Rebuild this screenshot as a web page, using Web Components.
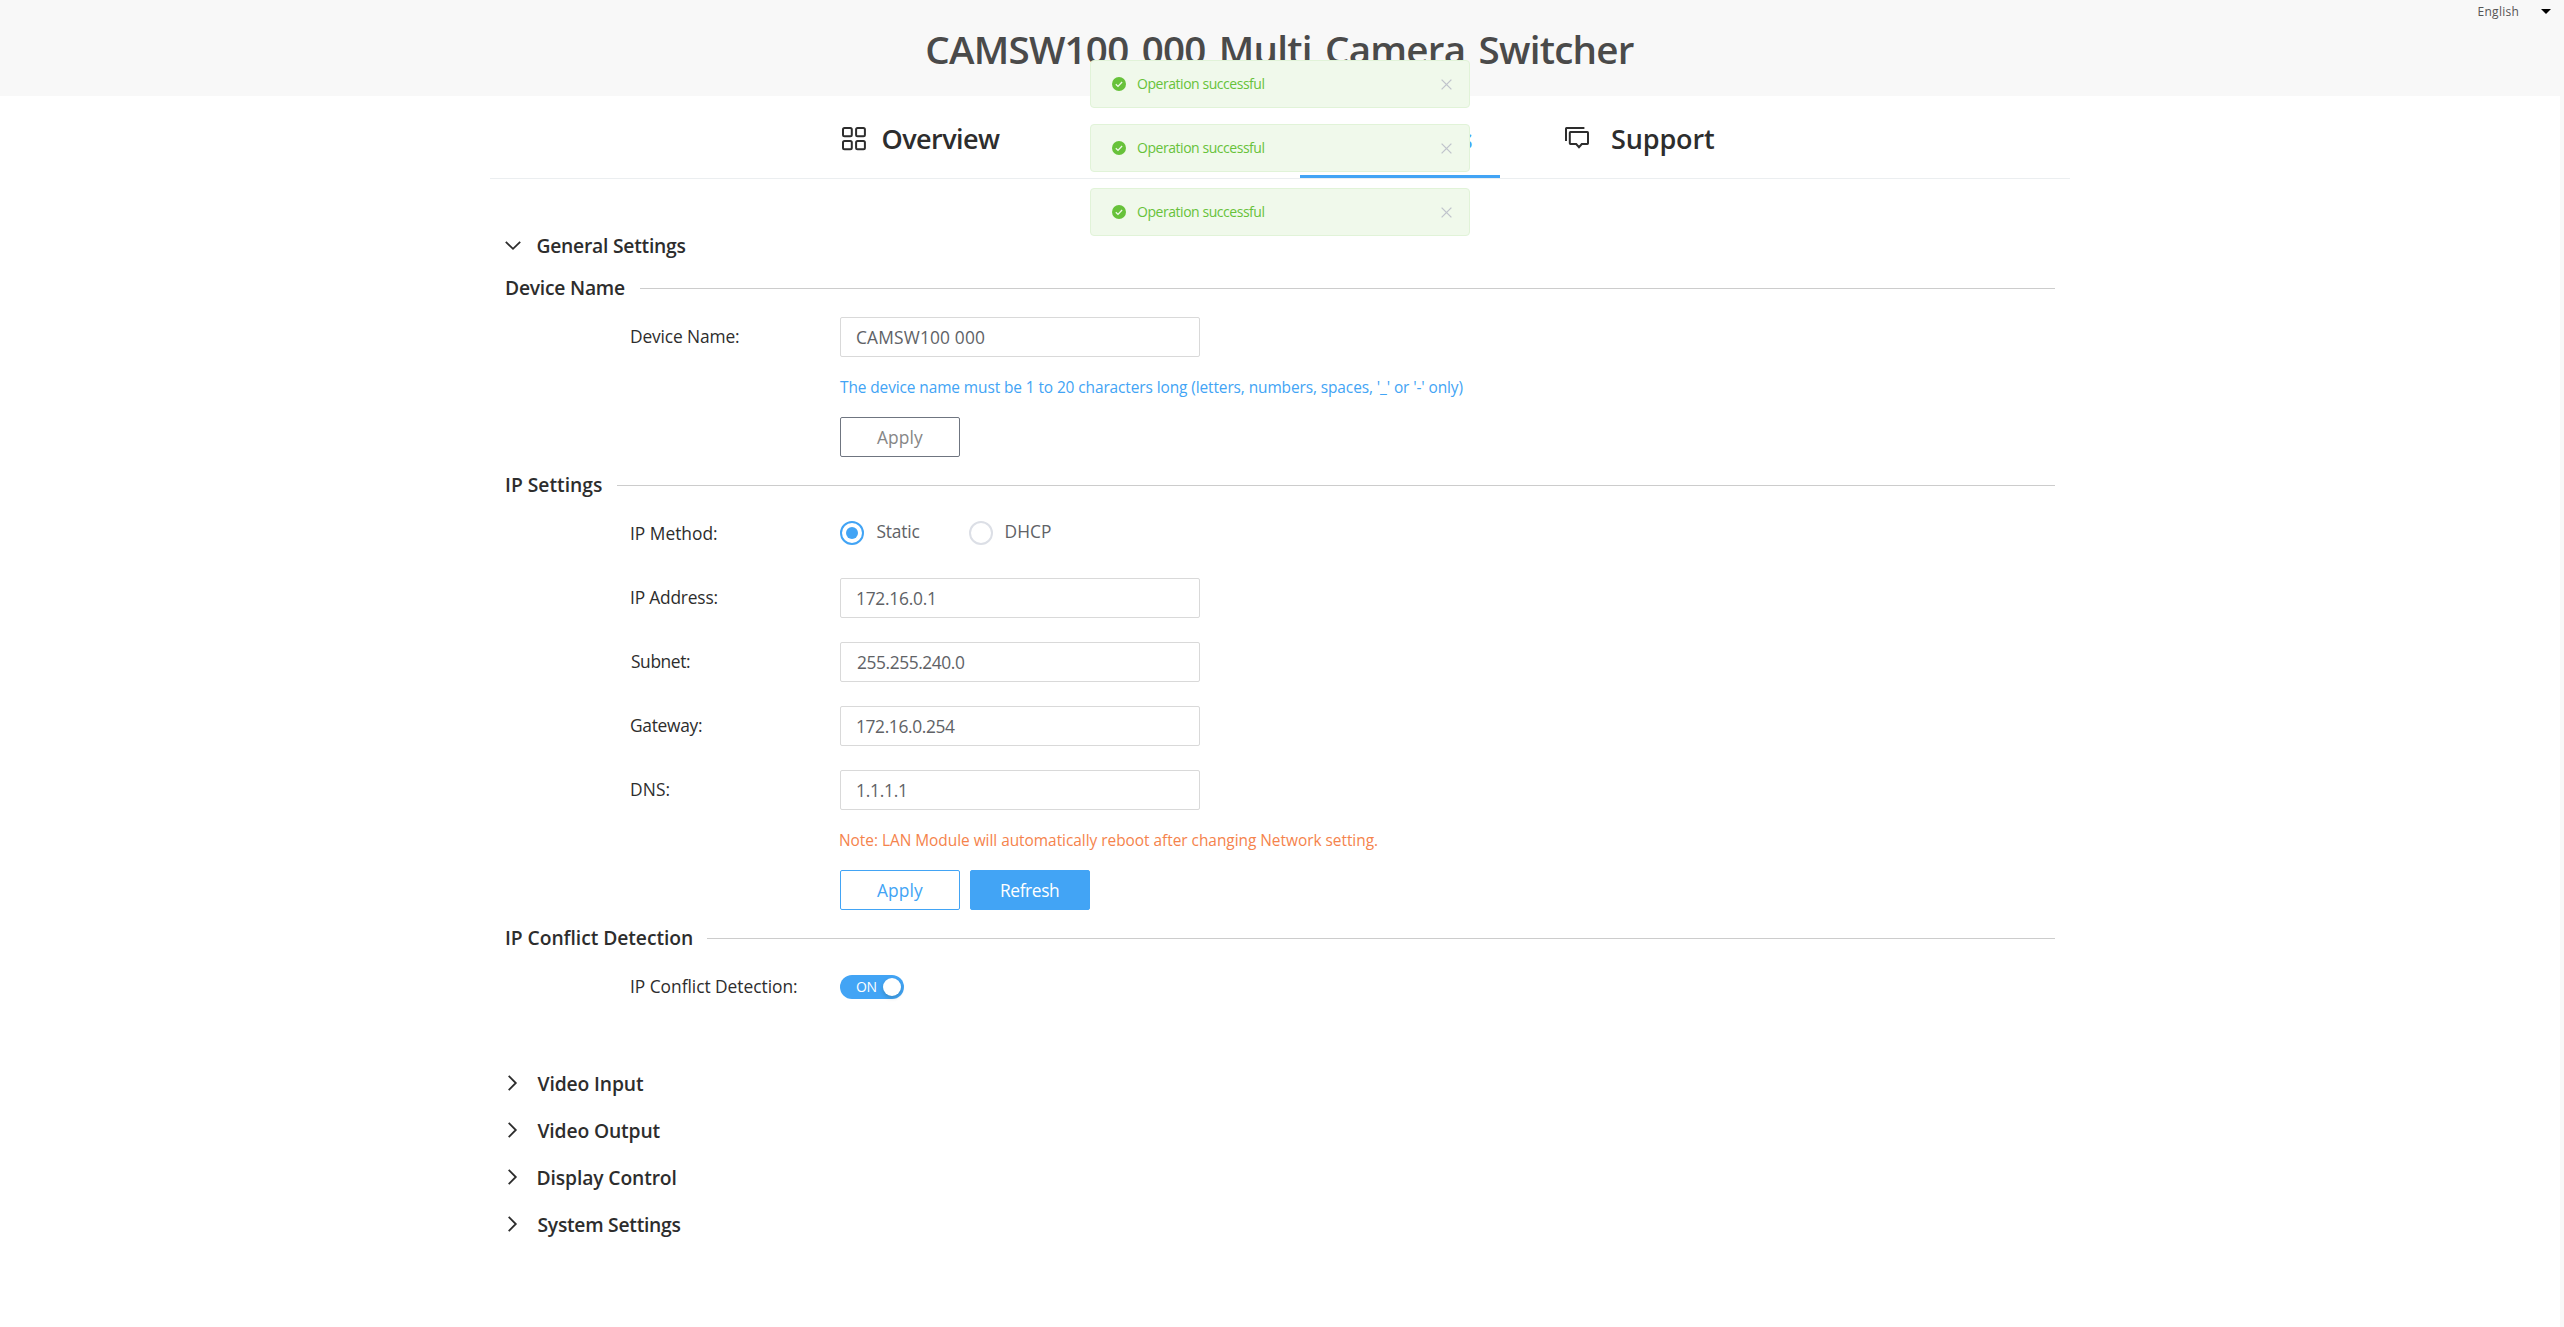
<!DOCTYPE html>
<html lang="en">
<head>
<meta charset="utf-8">
<title>CAMSW100 000 Multi Camera Switcher</title>
<style>
body{margin:0;background:#f8f8f8;font-family:"Open Sans","Noto Sans",sans-serif;color:#2d2d2d;height:1327px;overflow:hidden}
</style>
</head>
<body>
<app-shell></app-shell>
<script>
const define=(name,html,setup)=>{
  const t=document.createElement('template');t.innerHTML=html;
  customElements.define(name,class extends HTMLElement{
    connectedCallback(){
      if(this.shadowRoot)return;
      this.attachShadow({mode:'open'}).append(t.content.cloneNode(true));
      if(setup)setup.call(this,this.shadowRoot);
    }
  });
};
const ctx=document.createElement('canvas').getContext('2d');

/* One line of text tracked so that its ink spans the width given in w */
define('ui-text',`<style>
:host{display:block;white-space:pre;flex:none}
span{display:block}
</style><span><slot></slot></span>`,function(root){
  const px=parseFloat(this.getAttribute('size')),size=px>14?px*0.965:px,w=parseFloat(this.getAttribute('w'));
  const gap=parseFloat(this.getAttribute('word-gap')||0);
  const weight=this.getAttribute('weight')||'400',s=this.textContent;
  ctx.font=weight+' '+size+'px "Open Sans","Noto Sans",sans-serif';
  const m=ctx.measureText(s),left=-m.actualBoundingBoxLeft,ink=m.actualBoundingBoxRight-left;
  this.style.fontSize=size+'px';this.style.fontWeight=weight;this.style.width=w+'px';
  this.style.lineHeight=Math.round(size*1.069)+Math.round(size*0.293)+'px';
  const span=root.querySelector('span');
  span.style.wordSpacing=gap+'px';
  span.style.letterSpacing=((w-ink-gap*(s.split(' ').length-1))/(s.length-1))+'px';
  span.style.marginLeft=-left+'px';
});

define('ui-icon',`<style>:host{display:block;flex:none;line-height:0}svg{display:block;overflow:visible}</style><svg fill="none"></svg>`,function(root){
  const icons={
    grid:[24,23,'<g stroke="#2d2d2d" stroke-width="2"><rect x="1" y="1" width="8.8" height="8.2" rx="1.5"/><rect x="14.1" y="1" width="8.8" height="8.2" rx="1.5"/><rect x="1" y="14" width="8.8" height="8.2" rx="1.5"/><rect x="14.1" y="14" width="8.8" height="8.2" rx="1.5"/></g>'],
    gear:[24,23,'<g stroke="#42a4f5" stroke-width="2"><path d="M8 2h8l6 10-6 10H8L2 12z"/><circle cx="12" cy="12" r="4"/></g>'],
    chat:[24,23,'<g stroke="#2d2d2d" stroke-width="2"><path d="M1 14V1.5Q1 1 1.5 1h17.9"/><path d="M5.4 5h17q.6 0 .6.7v10.6q0 .7-.6.7H16.8L14 20.2 11.2 17H5.4q-.6 0-.6-.7V5.7q0-.7.6-.7z"/></g>'],
    down:[16,9,'<path d="M.8.8 8 7.8 15.2.8" stroke="#2d2d2d" stroke-width="1.8"/>'],
    right:[16,16,'<path d="M3.7.9 10.8 8l-7.1 7.1" stroke="#2d2d2d" stroke-width="1.8"/>'],
    caret:[10,5,'<path d="M0 0h10L5 5z" fill="#000"/>'],
    check:[14,14,'<circle cx="7" cy="7" r="7" fill="#67c23a"/><path d="m3.8 7.2 2.2 2.2 4.1-4.4" stroke="#f0f9eb" stroke-width="1.3"/>'],
    close:[11,11,'<path d="m.6.6 9.8 9.8M10.4.6.6 10.4" stroke="#c0c4cc" stroke-width="1.3"/>']
  };
  const [w,h,body]=icons[this.getAttribute('name')],svg=root.querySelector('svg');
  svg.setAttribute('width',w);svg.setAttribute('height',h);svg.setAttribute('viewBox','0 0 '+w+' '+h);svg.innerHTML=body;
});

define('app-header',`<style>
:host{display:grid;grid-template-columns:1fr auto 1fr;height:96px;background:#f8f8f8;color:#4a4a4a;width:2560px}
.title{padding:23px 0 0 1px}
.lang{display:flex;justify-content:flex-end;align-items:flex-start;padding-right:9px;gap:22.5px;color:#555}
ui-icon{padding-top:9px}.lang ui-text{padding-top:3px}
</style><div></div><div class="title"><ui-text size="40" weight="600" w="706.5" word-gap="4">CAMSW100 000 Multi Camera Switcher</ui-text></div>
<div class="lang"><ui-text size="12" w="40">English</ui-text><ui-icon name="caret"></ui-icon></div>`);

define('nav-tab',`<style>
:host{display:flex;box-sizing:border-box;width:200px;height:82px;align-items:center;border-bottom:3px solid transparent;padding:0 0 0 var(--pad,22px);gap:var(--gap,16.5px)}
:host([active]){border-color:#42a4f5;color:#42a4f5}
.icon,::slotted(*){margin-top:6px}
</style><div class="icon"></div><slot></slot>`,function(root){
  const n=document.createElement('ui-icon');
  n.setAttribute('name',this.getAttribute('icon'));root.querySelector('.icon').append(n);
});

define('nav-tabs',`<style>
:host{display:flex;gap:40px;padding-left:330px;border-bottom:1px solid #ebeef0;height:82px}
.spacer{width:200px}
</style><nav-tab icon="grid"><ui-text size="28" weight="600" w="117.5">Overview</ui-text></nav-tab>
<div class="spacer"></div>
<nav-tab icon="gear" active style="--pad:29px"><ui-text size="28" weight="600" w="103">Settings</ui-text></nav-tab>
<nav-tab icon="chat" style="--pad:25px;--gap:23px"><ui-text size="28" weight="600" w="102">Support</ui-text></nav-tab>`);

define('section-toggle',`<style>
:host{display:flex;height:47px;align-items:center;gap:16.5px}
div{margin-top:-2px}
:host([open]) div{margin-top:0}
</style><div></div><slot></slot>`,function(root){
  const n=document.createElement('ui-icon');n.setAttribute('name',this.hasAttribute('open')?'down':'right');
  root.querySelector('div').append(n);
});

define('group-title',`<style>
:host{display:flex;align-items:center;height:37px;gap:15px;margin-top:10px;padding-left:1px}
hr{flex:1;height:1px;border:0;margin:0;background:#ccc}
::slotted(*){margin-top:-2px}
</style><slot></slot><hr>`);

define('form-row',`<style>
:host{display:flex;height:40px;align-items:center;padding-left:126px;margin-top:24px}
.label{width:209px;margin-top:var(--label-shift,-2px)}
.field{display:flex;align-items:center;gap:10px;color:#606266}
</style><div class="label"><slot name="label"></slot></div><div class="field"><slot></slot></div>`);

define('text-field',`<style>
:host{display:flex;box-sizing:border-box;width:360px;height:40px;border:1px solid #d9d9d9;border-radius:2px;align-items:center;padding:0 16px;color:#606266}
</style><slot></slot>`);

define('form-note',`<style>
:host{display:flex;height:30px;align-items:center;margin-top:15px;padding-left:335px;color:#42a4f5}
:host([warn]){color:#f5834c}
</style><slot></slot>`);

define('form-actions',`<style>:host{display:flex;gap:10px;padding-left:335px;margin-top:15px}</style><slot></slot>`);

define('ui-button',`<style>
:host{display:flex;box-sizing:border-box;width:120px;height:40px;border:1px solid #6f7580;border-radius:2px;align-items:center;justify-content:center;color:#868686}
:host([kind=outline]){border-color:#42a4f5;color:#42a4f5}
:host([kind=solid]){border-color:#42a4f5;background:#42a4f5;color:#fff}
</style><slot></slot>`);

define('ui-radio',`<style>
:host{display:flex;align-items:center;gap:12.5px}
i{box-sizing:border-box;width:24px;height:24px;border-radius:50%;border:2px solid #dcdfe6;display:grid;place-items:center}
:host([checked]) i{border-color:#42a4f5}
:host([checked]) i::after{content:"";width:12px;height:12px;border-radius:50%;background:#42a4f5}
::slotted(*){margin-top:-4px}
</style><i></i><slot></slot>`);

define('ui-switch',`<style>
:host{display:flex;box-sizing:border-box;width:64px;height:24px;border-radius:12px;background:#42a4f5;color:#fff;align-items:center;justify-content:space-between;padding:0 3px 0 16px}
i{width:18px;height:18px;border-radius:50%;background:#fff;box-shadow:0 2px 4px rgba(0,35,11,.2)}
::slotted(*){margin-top:-1px}
</style><slot></slot><i></i>`);

define('toast-message',`<style>
:host{display:flex;box-sizing:border-box;width:380px;height:48px;border:1px solid #e1f3d8;border-radius:4px;background:#f0f9eb;color:#67c23a;align-items:center;padding:0 17.5px 0 21px}
ui-text{margin:-1px auto 0 11px}
</style><ui-icon name="check"></ui-icon><ui-text size="14" w="127.5">Operation successful</ui-text><ui-icon name="close"></ui-icon>`);

define('toast-stack',`<style>
:host{position:absolute;top:60px;left:1090px;display:flex;flex-direction:column;gap:16px}
</style><toast-message></toast-message><toast-message></toast-message><toast-message></toast-message>`);

define('settings-panel',`<style>
:host{display:block;padding:43px 15px 0;box-sizing:border-box}
.first{margin-top:1px}.tight{margin-top:10px}.method{margin:9px 0 25px;--label-shift:0}.after{margin-top:0}
.static{margin-right:39.5px}.rest{margin-top:53px}
</style>
<section-toggle open><ui-text size="20" weight="600" w="148">General Settings</ui-text></section-toggle>
<group-title class="first"><ui-text size="20" weight="600" w="119">Device Name</ui-text></group-title>
<form-row class="tight"><ui-text slot="label" size="18" w="108">Device Name:</ui-text><text-field><ui-text size="18" w="128">CAMSW100 000</ui-text></text-field></form-row>
<form-note><ui-text size="16" w="622.5">The device name must be 1 to 20 characters long (letters, numbers, spaces, '_' or '-' only)</ui-text></form-note>
<form-actions><ui-button><ui-text size="18" w="46">Apply</ui-text></ui-button></form-actions>
<group-title><ui-text size="20" weight="600" w="96">IP Settings</ui-text></group-title>
<form-row class="method"><ui-text slot="label" size="18" w="86">IP Method:</ui-text><ui-radio class="static" checked><ui-text size="18" w="43">Static</ui-text></ui-radio><ui-radio><ui-text size="18" w="45.5">DHCP</ui-text></ui-radio></form-row>
<form-row class="after"><ui-text slot="label" size="18" w="86.5">IP Address:</ui-text><text-field><ui-text size="18" w="77">172.16.0.1</ui-text></text-field></form-row>
<form-row><ui-text slot="label" size="18" w="59">Subnet:</ui-text><text-field><ui-text size="18" w="108">255.255.240.0</ui-text></text-field></form-row>
<form-row><ui-text slot="label" size="18" w="71">Gateway:</ui-text><text-field><ui-text size="18" w="98">172.16.0.254</ui-text></text-field></form-row>
<form-row><ui-text slot="label" size="18" w="38.5">DNS:</ui-text><text-field><ui-text size="18" w="48">1.1.1.1</ui-text></text-field></form-row>
<form-note warn><ui-text size="16" w="537">Note: LAN Module will automatically reboot after changing Network setting.</ui-text></form-note>
<form-actions><ui-button kind="outline"><ui-text size="18" w="46">Apply</ui-text></ui-button><ui-button kind="solid"><ui-text size="18" w="58">Refresh</ui-text></ui-button></form-actions>
<group-title><ui-text size="20" weight="600" w="186">IP Conflict Detection</ui-text></group-title>
<form-row class="tight"><ui-text slot="label" size="18" w="166">IP Conflict Detection:</ui-text><ui-switch><ui-text size="14" w="20.5">ON</ui-text></ui-switch></form-row>
<section-toggle class="rest"><ui-text size="20" weight="600" w="106.5">Video Input</ui-text></section-toggle>
<section-toggle><ui-text size="20" weight="600" w="123">Video Output</ui-text></section-toggle>
<section-toggle><ui-text size="20" weight="600" w="138">Display Control</ui-text></section-toggle>
<section-toggle><ui-text size="20" weight="600" w="143">System Settings</ui-text></section-toggle>`);

define('app-shell',`<style>
:host{display:block}
main{width:2560px;height:1231px;background:#fff;display:flex;justify-content:center}
.column{width:1580px}
</style><app-header></app-header><main><div class="column"><nav-tabs></nav-tabs><settings-panel></settings-panel></div></main><toast-stack></toast-stack>`);
</script>
</body>
</html>
